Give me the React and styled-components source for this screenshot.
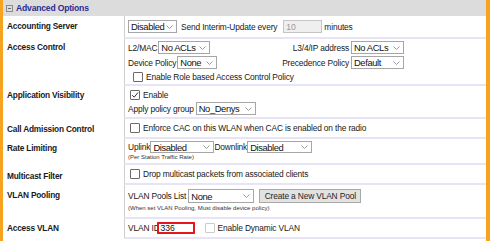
import React from "react";
import styled, { createGlobalStyle } from "styled-components";

const Global = createGlobalStyle`
  html, body { margin: 0; padding: 0; background: #fff; }
  body { font-family: "Liberation Sans", Arial, sans-serif; }
`;

const Panel = styled.div`
  width: 490px;
  height: 241px;
  box-sizing: border-box;
  border-left: 3px solid #f7a322;
  border-right: 4px solid #f7a322;
  overflow: hidden;
  background: #fff;
`;

const Header = styled.div`
  height: 16px;
  background: #dcdcdc;
  display: flex;
  align-items: center;
  gap: 3px;
  padding-left: 3px;
  font-size: 8.6px;
  font-weight: bold;
  color: #2b2b93;
  letter-spacing: -0.2px;
`;

const Body = styled.div`
  display: grid;
  grid-template-columns: 121px 1fr;
`;

const Label = styled.div`
  padding: ${(p) => p.$top}px 0 0 4px;
  font-size: 8.3px;
  line-height: 10px;
  font-weight: bold;
  letter-spacing: -0.2px;
  color: #1a1a1a;
`;

const Value = styled.div`
  box-sizing: border-box;
  height: ${(p) => p.$h}px;
  border-left: 1px solid #cfcfcf;
  border-bottom: 2px solid #e7e4f5;
  padding: ${(p) => p.$pt || 0}px 0 0 3px;
  display: flex;
  flex-direction: column;
  justify-content: ${(p) => (p.$center ? "center" : "flex-start")};
  gap: ${(p) => p.$gap || 0}px;
  font-size: 8.4px;
  letter-spacing: -0.15px;
  color: #202020;
`;

const Line = styled.div`
  display: flex;
  align-items: center;
  height: ${(p) => p.$h || 13}px;
`;

const Split = styled.div`
  display: grid;
  grid-template-columns: 160px 61px auto;
  align-items: center;
  height: 13px;
`;

const Cell = styled.div`
  display: flex;
  align-items: center;
  justify-content: ${(p) => (p.$right ? "flex-end" : "flex-start")};
  white-space: nowrap;
`;

const Text = styled.span`
  white-space: nowrap;
  margin-left: ${(p) => p.$ml || 0}px;
  margin-right: ${(p) => p.$mr || 0}px;
`;

const Small = styled.div`
  font-size: 6px;
  line-height: 7px;
  letter-spacing: 0;
  color: #333;
  white-space: nowrap;
`;

const SelectBox = styled.span`
  box-sizing: border-box;
  display: inline-flex;
  align-items: center;
  justify-content: space-between;
  flex: none;
  width: ${(p) => p.$w}px;
  height: ${(p) => p.$h || 13}px;
  margin-left: ${(p) => p.$ml || 0}px;
  border: 1px solid #a6a6a6;
  background: #fff;
  padding: 0 3px 0 2px;
  font-size: 9.4px;
  letter-spacing: -0.4px;
  color: #111;
  white-space: nowrap;
`;

const TextInput = styled.span`
  box-sizing: border-box;
  display: inline-flex;
  align-items: center;
  flex: none;
  width: ${(p) => p.$w}px;
  height: ${(p) => p.$h || 13}px;
  margin-left: ${(p) => p.$ml || 0}px;
  padding-left: 2px;
  border: ${(p) => (p.$alert ? "2px solid #e5161d" : "1px solid #c4c4c4")};
  background: ${(p) => (p.$disabled ? "#efefef" : "#fff")};
  color: ${(p) => (p.$disabled ? "#9a9a9a" : "#111")};
  font-size: 8.6px;
  letter-spacing: 0;
`;

const Box = styled.span`
  box-sizing: border-box;
  flex: none;
  width: 10px;
  height: 10px;
  margin-left: ${(p) => p.$ml || 2}px;
  margin-right: 3px;
  border: 1px solid ${(p) => (p.$disabled ? "#cacaca" : "#6a6a6a")};
  border-radius: 1px;
  background: #fff;
  display: inline-flex;
  align-items: center;
  justify-content: center;
`;

const Button = styled.span`
  box-sizing: border-box;
  flex: none;
  display: inline-flex;
  align-items: center;
  justify-content: center;
  width: 102px;
  height: 14px;
  margin-left: 5px;
  border: 1px solid #a9a9a9;
  background: #e2e2e2;
  color: #1e1e1e;
  font-size: 8.4px;
`;

const Minus = styled.span`
  box-sizing: border-box;
  width: 7px;
  height: 7px;
  border: 1px solid #8c8c8c;
  display: inline-flex;
  align-items: center;
  justify-content: center;
  &::after {
    content: "";
    width: 3px;
    height: 1px;
    background: #6c6c6c;
  }
`;

const Chevron = () => (
  <svg width="7" height="4" viewBox="0 0 7 4">
    <path d="M0.5 0.5 L3.5 3.5 L6.5 0.5" fill="none" stroke="#8f8f8f" strokeWidth="0.9" />
  </svg>
);

const Select = ({ w, h, ml, children }) => (
  <SelectBox $w={w} $h={h} $ml={ml}>
    <span>{children}</span>
    <Chevron />
  </SelectBox>
);

const Check = ({ checked, disabled, ml }) => (
  <Box $disabled={disabled} $ml={ml}>
    {checked && (
      <svg width="8" height="8" viewBox="0 0 8 8">
        <path d="M1.2 4.2 L3.2 6.2 L7 1.5" fill="none" stroke="#333" strokeWidth="1" />
      </svg>
    )}
  </Box>
);

export default function App() {
  return (
    <>
      <Global />
      <Panel>
        <Header>
          <Minus />
          <span>Advanced Options</span>
        </Header>
        <Body>
          <Label $top={5}>Accounting Server</Label>
          <Value $h={23} $center>
            <Line>
              <Select w={49}>Disabled</Select>
              <Text $ml={4}>Send Interim-Update every</Text>
              <TextInput $w={39} $ml={6} $disabled>10</TextInput>
              <Text $ml={2}>minutes</Text>
            </Line>
          </Value>

          <Label $top={3}>Access Control</Label>
          <Value $h={47} $pt={2} $gap={2}>
            <Split>
              <Cell>
                <Text $mr={1}>L2/MAC</Text>
                <Select w={52}>No ACLs</Select>
              </Cell>
              <Cell $right>L3/4/IP address</Cell>
              <Cell>
                <Select w={53} ml={2}>No ACLs</Select>
              </Cell>
            </Split>
            <Split>
              <Cell>
                <Text $mr={1}>Device Policy</Text>
                <Select w={40}>None</Select>
              </Cell>
              <Cell $right>Precedence Policy</Cell>
              <Cell>
                <Select w={53} ml={2}>Default</Select>
              </Cell>
            </Split>
            <Line $h={12}>
              <Check ml={5} />
              <Text>Enable Role based Access Control Policy</Text>
            </Line>
          </Value>

          <Label $top={4}>Application Visibility</Label>
          <Value $h={33} $pt={3} $gap={2}>
            <Line $h={11}>
              <Check checked />
              <Text>Enable</Text>
            </Line>
            <Line>
              <Text $mr={2}>Apply policy group</Text>
              <Select w={60}>No_Denys</Select>
            </Line>
          </Value>

          <Label $top={5}>Call Admission Control</Label>
          <Value $h={20} $center>
            <Line $h={11}>
              <Check />
              <Text>Enforce CAC on this WLAN when CAC is enabled on the radio</Text>
            </Line>
          </Value>

          <Label $top={4}>Rate Limiting</Label>
          <Value $h={26} $pt={2} $gap={1}>
            <Line $h={12}>
              <Text>Uplink</Text>
              <Select w={64} h={12}>Disabled</Select>
              <Text>Downlink</Text>
              <Select w={65} h={12}>Disabled</Select>
            </Line>
            <Small>(Per Station Traffic Rate)</Small>
          </Value>

          <Label $top={6}>Multicast Filter</Label>
          <Value $h={20} $center>
            <Line $h={11}>
              <Check />
              <Text>Drop multicast packets from associated clients</Text>
            </Line>
          </Value>

          <Label $top={5}>VLAN Pooling</Label>
          <Value $h={34} $pt={4} $gap={2}>
            <Line $h={14}>
              <Text $mr={2}>VLAN Pools List</Text>
              <Select w={66} h={14}>None</Select>
              <Button>Create a New VLAN Pool</Button>
            </Line>
            <Small>(When set VLAN Pooling, Must disable device policy)</Small>
          </Value>

          <Label $top={4}>Access VLAN</Label>
          <Value $h={20} $center>
            <Line $h={12}>
              <Text>VLAN ID</Text>
              <TextInput $w={38} $h={12} $ml={-3} $alert>336</TextInput>
              <Check disabled ml={10} />
              <Text>Enable Dynamic VLAN</Text>
            </Line>
          </Value>
        </Body>
      </Panel>
    </>
  );
}
